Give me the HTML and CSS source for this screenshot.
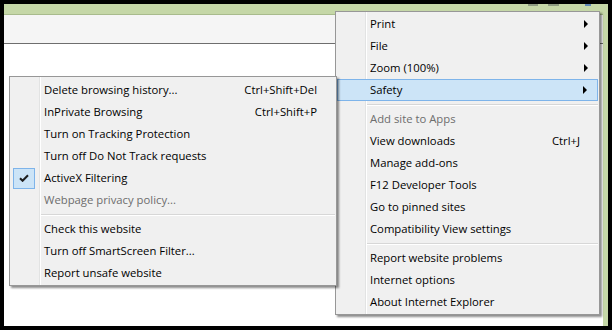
FILE: index.html
```html
<!DOCTYPE html>
<html lang="en">
<head>
    <meta charset="UTF-8">
    <title>Tools menu - Safety</title>
    <link rel="stylesheet" href="styles.css">
</head>
<body>
    <div class="window">
        <div class="titlebar">
            <span class="cap cap-min"></span>
            <span class="cap cap-max"></span>
            <span class="cap cap-close"></span>
        </div>
        <div class="inner">
            <div class="toolbar"></div>
            <div class="content"></div>
        </div>
    </div>

    <div class="menu main-menu">
        <div class="item"><span class="gutter"></span><span class="label">Print</span><span class="arrow"></span></div>
        <div class="item"><span class="gutter"></span><span class="label">File</span><span class="arrow"></span></div>
        <div class="item"><span class="gutter"></span><span class="label">Zoom (100%)</span><span class="arrow"></span></div>
        <div class="item active"><span class="gutter"></span><span class="label">Safety</span><span class="arrow"></span></div>
        <div class="sep"></div>
        <div class="item disabled"><span class="gutter"></span><span class="label">Add site to Apps</span></div>
        <div class="item"><span class="gutter"></span><span class="label">View downloads</span><span class="key">Ctrl+J</span></div>
        <div class="item"><span class="gutter"></span><span class="label">Manage add-ons</span></div>
        <div class="item"><span class="gutter"></span><span class="label">F12 Developer Tools</span></div>
        <div class="item"><span class="gutter"></span><span class="label">Go to pinned sites</span></div>
        <div class="item"><span class="gutter"></span><span class="label">Compatibility View settings</span></div>
        <div class="sep"></div>
        <div class="item"><span class="gutter"></span><span class="label">Report website problems</span></div>
        <div class="item"><span class="gutter"></span><span class="label">Internet options</span></div>
        <div class="item"><span class="gutter"></span><span class="label">About Internet Explorer</span></div>
    </div>

    <div class="menu sub-menu">
        <div class="item"><span class="gutter"></span><span class="label">Delete browsing history...</span><span class="key">Ctrl+Shift+Del</span></div>
        <div class="item"><span class="gutter"></span><span class="label">InPrivate Browsing</span><span class="key">Ctrl+Shift+P</span></div>
        <div class="item"><span class="gutter"></span><span class="label">Turn on Tracking Protection</span></div>
        <div class="item"><span class="gutter"></span><span class="label">Turn off Do Not Track requests</span></div>
        <div class="item">
            <span class="gutter">
                <span class="check">
                    <svg width="10" height="8" viewBox="0 0 10 8"><path d="M1 4.2 L3.6 6.8 L9 1.2" fill="none" stroke="#1e1e1e" stroke-width="2"/></svg>
                </span>
            </span>
            <span class="label">ActiveX Filtering</span>
        </div>
        <div class="item disabled"><span class="gutter"></span><span class="label">Webpage privacy policy...</span></div>
        <div class="sep"></div>
        <div class="item"><span class="gutter"></span><span class="label">Check this website</span></div>
        <div class="item"><span class="gutter"></span><span class="label">Turn off SmartScreen Filter...</span></div>
        <div class="item"><span class="gutter"></span><span class="label">Report unsafe website</span></div>
    </div>
</body>
</html>
```

FILE: styles.css
```css
body {
    margin: 0;
    width: 612px;
    height: 330px;
    background-color: #000;
    font-family: "Segoe UI", "Open Sans", sans-serif;
    font-size: 11.3px;
    color: #000;
    overflow: hidden;
    position: relative;
}
.window {
    margin: 4px 4px 0 4px;
    height: 322px;
    background-color: #c5d7a7;
    padding-right: 5px;
    box-sizing: border-box;
    display: flex;
    flex-direction: column;
}
.titlebar {
    height: 10px;
    display: flex;
    justify-content: flex-end;
    align-items: flex-start;
    gap: 10px;
    padding-right: 12px;
}
.cap {
    height: 2px;
    background-color: #8d9a80;
}
.cap-min {
    width: 10px;
}
.cap-max {
    width: 11px;
    margin-right: 16px;
}
.cap-close {
    width: 6px;
    background-color: #5f86b3;
}
.inner {
    flex: 1;
    display: flex;
    flex-direction: column;
    border-top: 1px solid #a8bb8c;
}
.toolbar {
    height: 28px;
    background-color: #f5f5f5;
    border-bottom: 1px solid #6e6e6e;
    box-shadow: 0 1px 0 #a9a9a9;
}
.content {
    flex: 1;
    background-color: #fff;
}

/* menus */
.menu {
    position: absolute;
    box-sizing: border-box;
    border: 1px solid #979797;
    background: linear-gradient(to right, transparent 29px, #e2e3e3 29px, #e2e3e3 30px, #fff 30px, #fff 31px, transparent 31px), #f0f0f0;
    box-shadow: 2px 2px 2px rgba(0, 0, 0, 0.45);
}
.main-menu {
    left: 335px;
    top: 11px;
    width: 265px;
    padding: 1px;
}
.sub-menu {
    left: 9px;
    top: 76px;
    width: 328px;
    padding: 2px 1px 1px;
}
.item {
    height: 22px;
    display: flex;
    align-items: center;
    padding-right: 9px;
    padding-bottom: 2px;
    box-sizing: border-box;
    white-space: nowrap;
}
.item.active {
    background-color: #cce4f7;
    border: 1px solid #7eb4ea;
}
.item.active .gutter {
    margin-left: -1px;
}
.item.disabled {
    color: #6d6d6d;
}
.gutter {
    width: 33px;
    flex: none;
    display: flex;
    align-items: center;
    height: 20px;
}
.label {
    flex: none;
}
.key {
    margin-left: auto;
    margin-right: 9px;
}
.arrow {
    margin-left: auto;
    width: 0;
    height: 0;
    border-left: 4px solid #000;
    border-top: 4px solid transparent;
    border-bottom: 4px solid transparent;
    margin-right: 1px;
    margin-bottom: -2px;
}
.sep {
    height: 1px;
    margin: 3px 0 2px 30px;
    background-color: #d7d7d7;
    border-bottom: 1px solid #fff;
}
.check {
    margin-left: 2px;
    margin-top: 2px;
    width: 22px;
    height: 21px;
    box-sizing: border-box;
    background-color: #cce4f7;
    border: 1px solid #7eb4ea;
    display: flex;
    align-items: center;
    justify-content: center;
}
```
